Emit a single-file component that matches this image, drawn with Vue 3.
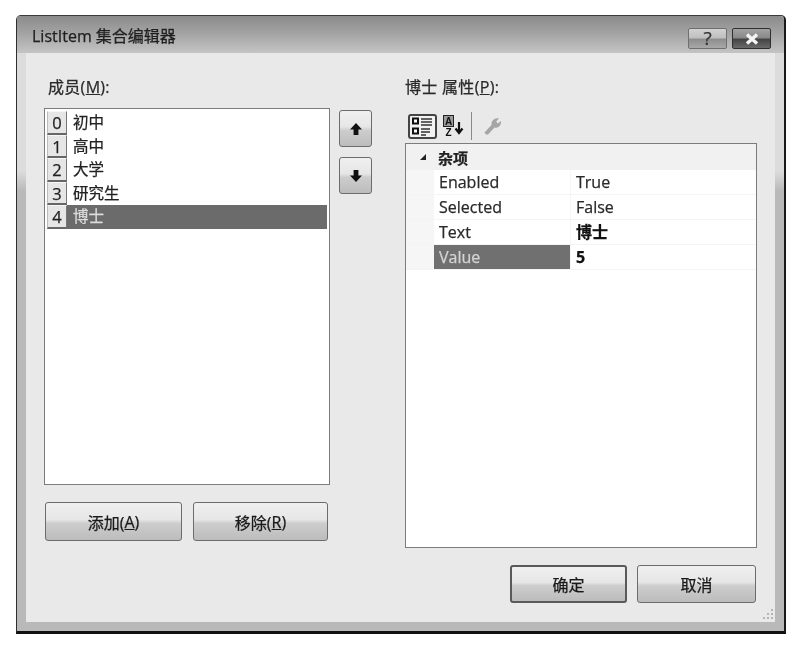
<script setup>
const members = [
  { i: 0, t: '初中' },
  { i: 1, t: '高中' },
  { i: 2, t: '大学' },
  { i: 3, t: '研究生' },
  { i: 4, t: '博士', sel: true }
]
const props = [
  { n: 'Enabled', v: 'True' },
  { n: 'Selected', v: 'False' },
  { n: 'Text', v: '博士', bold: true },
  { n: 'Value', v: '5', bold: true, sel: true }
]
</script>

<template>
  <div class="page">
    <div class="window">
      <div class="titlebar">
        <span class="title">ListItem 集合编辑器</span>
        <div class="winbtns">
          <div class="winbtn help">?</div>
          <div class="winbtn close">
            <svg width="16" height="12" viewBox="0 0 16 12"><path d="M3 1.5 L13 10.5 M13 1.5 L3 10.5" stroke="#f4f4f4" stroke-width="3.4" fill="none"/></svg>
          </div>
        </div>
      </div>
      <div class="client">
        <div class="main">
          <div class="left">
            <div class="label">成员(<u>M</u>):</div>
            <div class="listrow">
              <div class="listbox">
                <div v-for="m in members" :key="m.i" class="item" :class="{ sel: m.sel }">
                  <span class="idx">{{ m.i }}</span>
                  <span class="txt">{{ m.t }}</span>
                </div>
              </div>
              <div class="moves">
                <button class="btn move">
                  <svg width="14" height="14" viewBox="0 0 14 14"><path d="M7 1 L13 7.5 H9.4 V13 H4.6 V7.5 H1 Z" fill="#111"/></svg>
                </button>
                <button class="btn move">
                  <svg width="14" height="14" viewBox="0 0 14 14"><path d="M7 13 L13 6.5 H9.4 V1 H4.6 V6.5 H1 Z" fill="#111"/></svg>
                </button>
              </div>
            </div>
            <div class="addrow">
              <button class="btn wide add">添加(<u>A</u>)</button>
              <button class="btn wide remove">移除(<u>R</u>)</button>
            </div>
          </div>
          <div class="right">
            <div class="label">博士 属性(<u>P</u>):</div>
            <div class="toolbar">
              <div class="tool active">
                <svg width="23" height="20" viewBox="0 0 23 20">
                  <rect x="2" y="2.5" width="5" height="5" fill="#fff" stroke="#111" stroke-width="2"/>
                  <rect x="2" y="12.5" width="5" height="5" fill="#fff" stroke="#111" stroke-width="2"/>
                  <path d="M10 3 H21 M10 6 H21 M10 9 H21 M10 13 H19 M10 16 H19 M10 19 H15" stroke="#333" stroke-width="1.5"/>
                </svg>
              </div>
              <div class="tool sort">
                <svg width="22" height="22" viewBox="0 0 22 22">
                  <rect x="1.5" y="0.5" width="10" height="11" fill="#9a9a9a" stroke="#222"/>
                  <text x="6.5" y="9.5" class="az">A</text>
                  <text x="6.5" y="20.5" class="az">Z</text>
                  <path d="M17 7 V17 M13.5 13.5 L17 18 L20.5 13.5" stroke="#111" stroke-width="2.2" fill="none"/>
                </svg>
              </div>
              <div class="sep"></div>
              <div class="tool wrench">
                <svg width="20" height="20" viewBox="0 0 20 20">
                  <path d="M3 18.5 L1.5 16.5 L8.5 9 C8 5 11.5 1.5 16 2.5 L13.2 5.5 L14.8 7.5 L18 5 C18.5 9 15.5 12.5 11.5 11.5 L5 18.5 Z" fill="#a5a5a5"/>
                </svg>
              </div>
            </div>
            <div class="grid">
              <div class="cat">
                <svg class="caret" width="8" height="8" viewBox="0 0 8 8"><path d="M7 1 V7 H1 Z" fill="#222"/></svg>
                <span>杂项</span>
              </div>
              <div v-for="p in props" :key="p.n" class="prow">
                <div class="gutter"></div>
                <div class="pname" :class="{ sel: p.sel }">{{ p.n }}</div>
                <div class="pval" :class="{ bold: p.bold }">{{ p.v }}</div>
              </div>
            </div>
          </div>
        </div>
        <div class="footer">
          <button class="btn ok">确定</button>
          <button class="btn cancel">取消</button>
        </div>
        <svg class="grip" width="13" height="13" viewBox="0 0 13 13">
          <path d="M10 1h2v2h-2zM6 5h2v2H6zM10 5h2v2h-2zM2 9h2v2H2zM6 9h2v2H6zM10 9h2v2h-2z" fill="#b5b5b5"/>
        </svg>
      </div>
    </div>
  </div>
</template>

<style>
html, body { margin: 0; background: #fff; }
</style>

<style scoped>
.page {
  width: 802px;
  height: 645px;
  padding: 15px 0 0 16px;
  box-sizing: border-box;
  background: #fff;
  font-family: "Open Sans", "Noto Sans CJK SC", sans-serif;
  color: #1c1c1c;
  -webkit-text-stroke: 0.25px;
  filter: blur(0.6px);
}
.window {
  width: 770px;
  height: 619px;
  box-sizing: border-box;
  border-top: 1px solid #3a3a3a;
  border-left: 1px solid #2e2e2e;
  border-right: 2px solid #1a1a1a;
  border-bottom: 3px solid #111;
  border-radius: 5px 5px 0 0;
  background: linear-gradient(180deg, #dcdcdc 0, #dcdcdc 155px, #b9b9b9 175px, #b9b9b9 100%);
  padding: 0 9px 9px 9px;
  display: flex;
  flex-direction: column;
}
.titlebar {
  height: 37px;
  margin: 0 -9px;
  padding: 0 13px 0 15px;
  display: flex;
  align-items: center;
  justify-content: space-between;
  background: linear-gradient(180deg, #8b8b8b 0, #a5a5a5 50%, #c4c4c4 100%);
  border-radius: 4px 4px 0 0;
  flex: none;
}
.title {
  font-size: 16px;
  color: #202020;
}
.winbtns {
  display: flex;
  gap: 5px;
  margin-top: 8px;
}
.winbtn {
  width: 39px;
  height: 21px;
  box-sizing: border-box;
  border-radius: 2px;
  display: flex;
  align-items: center;
  justify-content: center;
}
.help {
  border: 1px solid #6f6f6f;
  background: linear-gradient(180deg, #d2d2d2 0, #c0c0c0 45%, #8e8e8e 55%, #a8a8a8 100%);
  color: #333;
  font-size: 19px;
  line-height: 19px;
  font-weight: 400;
}
.close {
  border: 1px solid #2f2f2f;
  background: linear-gradient(180deg, #a2a2a2 0, #8a8a8a 45%, #444 55%, #6a6a6a 100%);
}
.client {
  flex: 1;
  background: #e9e9e9;
  position: relative;
  padding: 24px 18px 0 18px;
  display: flex;
  flex-direction: column;
  min-height: 0;
}
.main {
  display: flex;
  gap: 33px;
  align-items: flex-start;
}
.left { width: 328px; flex: none; }
.right { width: 352px; flex: none; }
.label {
  height: 20px;
  line-height: 20px;
  font-size: 16px;
  letter-spacing: 0.3px;
  margin-left: 4px;
  color: #2a2a2a;
}
.right .label { margin-left: 0; }
.listrow {
  display: flex;
  gap: 9px;
  margin-top: 11px;
  align-items: flex-start;
}
.listbox {
  width: 286px;
  height: 377px;
  box-sizing: border-box;
  flex: none;
  background: #fff;
  border: 1px solid #7c7c7c;
  padding: 2px 2px;
}
.item {
  display: flex;
  height: 23.5px;
  font-size: 15.5px;
  line-height: 23px;
  box-sizing: border-box;
}
.idx {
  width: 20px;
  flex: none;
  box-sizing: border-box;
  background: #e6e6e6;
  border-top: 1px solid #f6f6f6;
  border-left: 1px solid #bbb;
  border-right: 1px solid #777;
  border-bottom: 2px solid #666;
  text-align: center;
  font-size: 16.5px;
  line-height: 21px;
  color: #222;
}
.txt {
  flex: 1;
  padding-left: 6px;
  color: #222;
}
.item.sel .txt {
  background: #6b6b6b;
  color: #dcdcdc;
}
.moves {
  display: flex;
  flex-direction: column;
  gap: 10px;
  margin-top: 2px;
}
.btn {
  box-sizing: border-box;
  border: 1.5px solid #6c6c6c;
  border-radius: 3px;
  background: linear-gradient(180deg, #f0f0f0 0, #e6e6e6 45%, #cdcdcd 55%, #bcbcbc 100%);
  font-family: inherit;
  color: #1a1a1a;
  font-size: 16px;
  padding: 0;
  display: flex;
  align-items: center;
  justify-content: center;
}
.move { width: 33px; height: 37px; }
.addrow {
  display: flex;
  gap: 11px;
  margin-top: 17px;
  padding-left: 1px;
}
.wide { height: 39px; }
.add { width: 137px; }
.remove { width: 135px; }
.toolbar {
  display: flex;
  align-items: center;
  height: 28px;
  margin-top: 15px;
  margin-bottom: 3px;
  padding-left: 3px;
}
.tool {
  display: flex;
  align-items: center;
  justify-content: center;
}
.active {
  width: 29px;
  height: 25px;
  box-sizing: border-box;
  border: 2px solid #444;
  border-radius: 3px;
  background: #f2f2f2;
}
.sort { width: 22px; margin-left: 5px; }
.sep {
  width: 1px;
  height: 28px;
  background: #8a8a8a;
  margin-left: 7px;
}
.wrench { margin-left: 11px; }
.az {
  font-family: "Liberation Sans", sans-serif;
  font-size: 10px;
  font-weight: 700;
  text-anchor: middle;
  fill: #111;
}
.grid {
  height: 405px;
  box-sizing: border-box;
  background: #fff;
  border: 1px solid #7c7c7c;
}
.cat {
  height: 26px;
  display: flex;
  align-items: center;
  background: #f1f1f1;
  font-size: 15px;
  font-weight: 700;
  color: #222;
  padding-left: 13px;
}
.caret { margin-right: 11px; }
.prow {
  display: flex;
  height: 25px;
  font-size: 16px;
  line-height: 24px;
  border-bottom: 1px solid #f4f4f4;
  box-sizing: border-box;
}
.gutter {
  width: 28px;
  flex: none;
  background: #f6f6f6;
}
.pname {
  width: 137px;
  flex: none;
  box-sizing: border-box;
  padding-left: 5px;
  color: #2a2a2a;
  border-right: 1px solid #f6f6f6;
}
.pname.sel {
  background: #707070;
  color: #d4d4d4;
}
.pval {
  flex: 1;
  padding-left: 5px;
  color: #2a2a2a;
}
.pval.bold { font-weight: 700; color: #111; }
.footer {
  display: flex;
  justify-content: flex-end;
  gap: 10px;
  margin-top: 17px;
  padding-right: 1px;
}
.ok {
  width: 117px;
  height: 38px;
  border: 2px solid #5a5a5a;
}
.cancel {
  width: 119px;
  height: 38px;
}
.grip {
  position: absolute;
  right: 1px;
  bottom: 1px;
}
</style>
